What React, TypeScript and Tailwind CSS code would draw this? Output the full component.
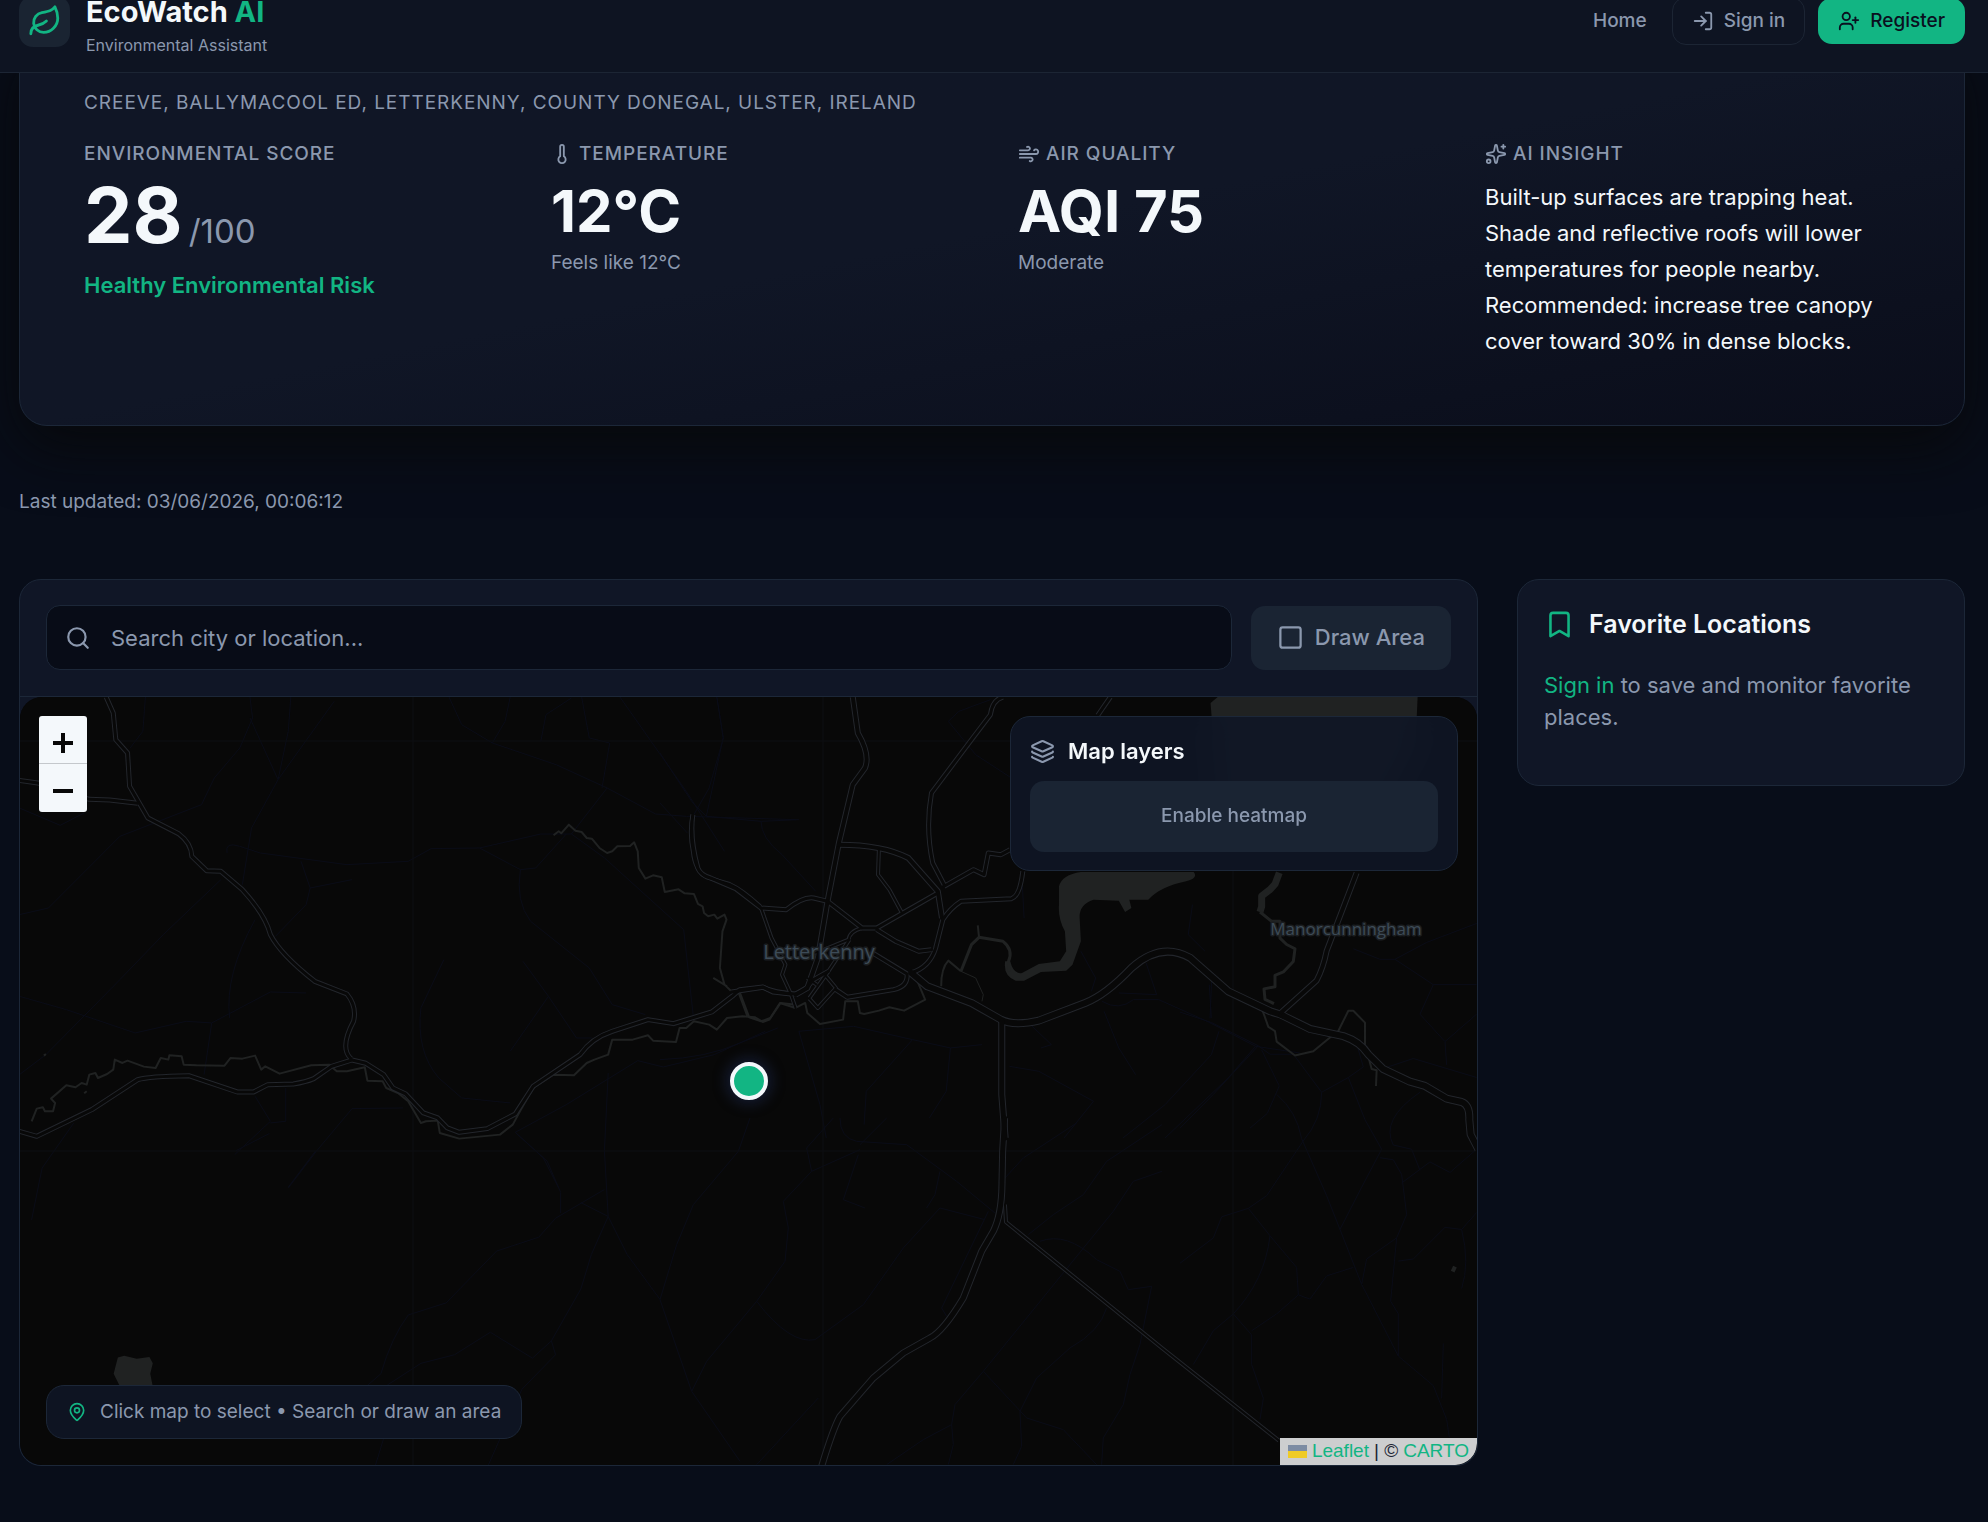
import { Bookmark, Layers, Leaf, LogIn, MapPin, Search, Sparkles, Square, Thermometer, UserPlus, Wind } from "lucide-react";
import type { ReactNode } from "react";

type Tile = {
  transform: string;
  roads: { d: string; width: number }[];
  rivers?: { d: string; width: number }[];
  water?: string[];
  lanes: string;
};

// map geometry, split by tile so every tile keeps its own coordinate space
const TILES: Tile[] = [
  {
    transform: "translate(0 690) scale(.5102 .3333)",
    roads: [
      {
        width: 5,
        d: "M208 27 L222 75 L227 155 L250 195 L254 295 L290 390 L350 437 Q375 465 376 505 L405 548 L433 550 L475 605 Q520 680 530 740 Q550 800 617 880 L680 918 Q700 955 693 1000 Q665 1080 688 1112",
      },
      { width: 5, d: "M38 277 L74 285 L175 334 L215 336 L270 346" },
      {
        width: 5,
        d: "M38 1330 L72 1345 L180 1265 L270 1175 Q290 1165 370 1163 L465 1212 L497 1212 L525 1190 L575 1188 Q600 1182 615 1172 L650 1135 L690 1116 L717 1126 L752 1160 L770 1200 L795 1218 L830 1275 L858 1290 L877 1320 L900 1333 L955 1322 L1010 1278 L1045 1195 L1137 1100 Q1160 1050 1200 1030 L1270 995 L1320 1007 L1395 972 L1435 925 L1450 905 L1495 897 L1515 912 L1550 918",
      },
      { width: 4, d: "M1358 380 Q1350 430 1358 490 Q1362 550 1385 568 L1430 588 Q1455 605 1490 655" },
    ],
    rivers: [
      {
        width: 2,
        d: "M62 1300 L72 1262 L84 1258 L88 1270 L104 1270 L108 1245 L100 1232 L130 1192 L148 1198 L160 1185 L170 1190 L175 1160 L187 1155 L192 1170 L210 1158 L222 1145 L225 1115 L240 1125 L250 1118 L282 1136 L305 1140 L315 1110 L330 1115 L332 1102 L356 1105 L360 1130 L385 1132 L440 1133 L452 1110 L475 1112 L500 1103 L512 1145 L520 1135 L548 1157 L610 1132 L645 1130 L660 1150 L680 1150 L715 1138 L720 1178 L750 1180 L757 1200 L780 1215 L800 1240 L825 1305 L835 1300 L858 1298 L862 1335 L900 1352 L980 1340 L1005 1310 L1020 1268 L1045 1200 L1085 1160 L1125 1162 L1150 1125 L1165 1115 L1192 1100 L1200 1055 L1240 1055 L1270 1042 L1280 1058 L1325 1062 L1332 1020 L1345 1020 L1360 1000 L1390 1010 L1405 1025 L1425 990 L1455 985 L1480 988 L1495 1002 L1508 995 L1530 945 L1560 950",
      },
      {
        width: 2,
        d: "M1085 442 L1095 430 L1100 436 L1115 410 L1128 428 L1140 432 L1150 450 L1160 452 L1175 480 L1190 495 L1200 490 L1210 475 L1235 474 L1243 463 L1250 490 L1252 540 L1265 572 L1280 562 L1297 568 L1303 612 L1330 604 L1342 616 L1360 618 L1368 648 L1377 655 L1380 675 L1388 685 L1400 680 L1406 692 L1420 680 L1424 695 L1416 730 L1411 840 L1420 890 L1437 915 M1398 870 L1425 895 M1448 915 L1465 985",
      },
      { width: 2, d: "M86 1103 L90 1098 M165 1216 L170 1210" },
    ],
    lanes:
      "M38 680 L95 660 L235 445 L395 350 L420 270 L470 180 L495 90 L490 27 M655 40 L545 275 L493 420 L475 590 M490 90 L545 275 M570 27 L565 130 L545 275 M285 27 L280 130 L255 180 M880 27 L905 110 L965 165 L1090 230 L1190 300 L1285 378 L1345 385 L1560 395 M1000 27 L990 100 L965 165 M1060 160 L1070 80 L1120 30 M1140 27 L1155 150 L1195 165 L1180 300 M445 495 Q440 460 470 475 L510 495 L680 530 L800 520 L845 482 L940 480 L1060 438 L1120 438 L1185 510 L1340 725 L1360 1000 M1190 300 L1120 438 M38 925 L130 965 L265 1035 L365 1000 L415 1005 L530 912 L600 915 M433 575 L320 740 L235 875 L90 1100 L38 1160 M940 480 L1020 545 Q1010 640 1040 700 L1155 840 L1200 950 L1265 980 M1020 545 L1050 540 L1110 438 M1025 820 L1075 925 L1000 1090 M1075 925 L1130 1050 L1160 1050 M870 815 L825 960 Q815 1090 860 1170 L905 1230 L1000 1245 M1010 1333 L1110 1250 L1250 1118 L1300 1137 L1400 1100 L1500 1030 M1215 27 L1345 310 L1420 490 M1405 27 L1418 150 L1390 300 L1360 380 M1010 1333 L1065 1410 L1095 1500 M590 520 L608 600 L600 650 L540 745 M608 600 L690 575 M450 990 Q440 860 500 695 M415 1005 L400 1160 M500 1225 L530 1300 L460 1400 M560 1200 L560 1300 L530 1305 M790 1260 L690 1262 L620 1390 L565 1500 M38 360 L118 412 L165 375",
  },
  {
    transform: "translate(660 680) scale(.4209 .3333)",
    roads: [
      { width: 6, d: "M458 57 L470 165 Q500 230 487 270 L458 320 L425 495 L398 670 L375 840 L350 930 L322 950" },
      { width: 6, d: "M425 500 Q530 500 590 540 L660 640 L670 720" },
      { width: 5, d: "M815 57 Q790 65 785 110 L740 185 L645 345 Q630 450 648 555 L675 620" },
      { width: 5, d: "M1070 57 L1040 112" },
      { width: 5, d: "M675 625 L745 575 L770 590 L780 525 L810 530 L832 515" },
      { width: 5, d: "M862 580 Q855 655 835 662 L715 670 Q690 690 672 725 L655 810 Q640 870 595 885" },
      {
        width: 5,
        d: "M78 410 Q70 480 90 570 Q95 590 120 600 L180 632 L240 690 L300 695 Q340 655 365 660 L398 670 L480 750 L515 750 L660 645",
      },
      { width: 4, d: "M520 515 L518 590 L545 635 L575 705" },
      { width: 5, d: "M515 755 L560 790 L615 820 L645 815" },
      { width: 4, d: "M480 750 Q450 760 448 785 L390 815 L355 830 M450 785 L400 880 L355 960" },
      { width: 4, d: "M240 690 L265 780 L298 860 L290 890 L310 945 L322 990" },
      { width: 5, d: "M170 942 L245 928 Q270 945 322 948 Q345 940 365 905 L400 880" },
      { width: 4, d: "M395 895 L418 930 L375 990 L355 962 M350 900 L372 920" },
      { width: 5, d: "M418 935 L445 958 L555 935 Q590 925 587 888 L505 825" },
      {
        width: 8,
        d: "M597 885 L635 925 L740 975 L810 1025 Q840 1045 900 1028 L1010 975 Q1060 950 1120 870 Q1190 790 1260 840 L1350 940 L1450 1000 L1480 1012",
      },
      { width: 7, d: "M812 1030 L812 1250 L820 1380" },
    ],
    rivers: [
      { width: 3, d: "M715 880 L740 800 L758 778 L815 790 Q840 815 828 850 L830 880" },
      { width: 2, d: "M755 742 L758 778 M668 925 Q668 870 685 848 L715 880" },
      { width: 1, d: "M715 880 L750 900 L768 950 L765 970" },
      {
        width: 2,
        d: "M190 945 L212 1018 L240 1030 L262 1020 L285 975 L322 990 L345 975 L350 1005 L380 1038 L435 1025 L440 970 L470 970 L475 1005 L485 1008 L520 998 L545 988 L580 998 L630 965 L610 905",
      },
    ],
    water: [
      "M948 625 Q955 590 1000 582 L1268 582 Q1280 600 1250 610 Q1190 625 1160 665 L1115 665 L1120 690 L1105 702 L1090 668 L1030 665 Q995 680 997 720 L1000 790 L980 860 L965 878 L905 882 L865 908 L845 908 Q815 895 820 850 L832 850 Q840 890 860 885 L900 858 L950 850 L965 820 L962 760 Q945 720 948 680 Z",
      "M1308 75 L1325 57 L1800 57 L1795 200 L1700 420 L1330 420 Z",
    ],
    lanes:
      "M0 225 L75 370 L110 415 L240 430 L330 425 M135 57 L150 180 L110 415 M0 375 L65 465 M240 430 Q240 480 290 530 L370 640 M685 130 L750 230 L835 300 M685 130 L710 100 L785 65 M1000 820 L1035 900 L1025 940 M1265 680 L1255 770 L1295 820 M1155 855 L1180 950 L1090 945 M1185 965 L1300 1030 L1415 1105 L1520 1125 M1050 970 Q1090 1000 1125 965 L1185 965 M0 1145 Q110 1140 190 1095 L280 1050 M330 1060 L460 1045 L600 1085 L690 1110 L765 1100 M600 1085 L490 1240 L485 1340 M690 1110 L680 1240 L640 1320 M880 1040 L930 1100 L905 1110 M1055 1000 L1090 1110 L1130 1190 M1328 1060 L1310 1130 L1200 1280 L1100 1380 M1415 1105 L1350 1200 L1200 1380 M830 1165 L900 1180 L1030 1270 L960 1380 M1305 920 L1310 1020 M330 1060 L380 1280 L395 1380 M860 600 L865 720",
  },
  {
    transform: "translate(1180 860) scale(.3333 .4221)",
    roads: [
      {
        width: 8,
        d: "M305 372 L390 405 L490 422 Q540 435 565 465 L610 500 L690 530 L735 540 L800 570 L845 578 Q870 585 868 620 L872 655 L895 690",
      },
      { width: 6, d: "M305 365 L410 290 Q430 260 440 220 L530 35" },
    ],
    rivers: [
      { width: 7, d: "M298 35 L285 62 L270 75 L245 90 L245 115 L240 128" },
      { width: 3, d: "M240 128 L275 150 L300 150 L300 190 L320 205 L345 215 L340 245 L310 270 L285 278 L285 305 L252 310 L255 335 L282 345" },
      {
        width: 2,
        d: "M248 362 L265 400 L285 410 L290 435 L345 468 L400 458 L450 425 L475 410 L505 362 L520 362 L555 390 L555 445 M565 470 L575 500 L590 503 L588 540",
      },
      { width: 4, d: "M818 980 L825 968" },
    ],
    lanes:
      "M0 365 L95 390 L235 445 L270 465 L345 465 M345 470 L425 555 L505 520 L550 495 L530 440 M235 445 L100 560 L0 640 M245 455 L298 540 L262 605 L210 640 M290 560 Q350 600 365 665 L440 800 L545 1010 L655 1180 L760 1250 L800 1330 L808 1372 M370 670 L260 800 L205 830 L125 850 L100 900 L0 960 M205 830 L270 895 L350 970 L355 1035 L390 1045 L440 990 L520 970 M270 895 Q255 1000 160 1080 L100 1120 L40 1200 M890 155 L740 200 L645 240 L600 240 L520 215 M645 240 L760 300 L890 300 M760 300 L720 370 L795 435 L890 370 M795 435 L800 490 M425 555 Q425 620 370 670 M505 520 L555 620 L605 690 L545 780 L480 880 M650 900 L680 845 L665 750 L640 715 L600 710 M650 900 L632 1050 L655 1080 L655 1180 M605 500 L700 475 L890 520 M720 555 Q600 620 640 680 L695 690 L720 740 M665 770 L750 720 L810 745 L890 690 M545 1010 L560 950 L650 900 M655 955 L700 950 L795 875 L845 880 L890 840 M845 880 Q870 960 845 1020 M160 1080 L215 1130 L215 1200 L250 1280 L240 1330 M215 1120 L290 1080 L355 1035 M790 1150 L785 1280 M95 290 L90 380",
  },
  {
    transform: "translate(640 1120) scale(.3333)",
    roads: [
      {
        width: 7,
        d: "M1094 0 L1088 100 L1086 200 Q1085 290 1060 340 L1025 400 L970 540 Q910 640 870 660 L790 705 L700 780 L600 895 Q580 930 545 1045",
      },
      { width: 4, d: "M1095 260 L1098 312 L1566 690 L1917 968" },
    ],
    lanes:
      "M330 0 L295 100 L160 260 L110 380 L60 545 L110 690 L155 820 L300 1030 M580 0 L500 90 L515 160 M600 0 Q600 60 650 70 L800 80 L950 190 L1065 285 M660 95 L515 160 L430 250 L445 330 L435 430 L350 550 L200 730 L155 820 M655 110 L610 245 L675 270 M350 550 Q450 680 525 665 L670 560 L790 390 L900 270 L1035 305 M1045 280 L905 570 L920 595 M740 0 L660 80 M900 160 L885 230 L860 270 M1310 15 L1150 120 L1095 180 M1566 20 L1400 130 L1330 230 L1240 290 L1165 350 M1566 160 L1480 190 L1420 280 L1030 760 L945 860 L935 920 L850 965 L740 1040 M1030 760 L1160 900 L1270 935 L1370 1040 M1400 570 Q1380 640 1290 690 L1190 780 L1140 880 L1145 985 L1120 1040 M1200 370 Q1280 340 1370 425 L1440 460 L1465 515 L1535 505 L1500 680 L1470 770 L1450 860 L1390 960 L1385 1040 M935 920 L940 980 L925 1040 M535 840 L350 1040",
  },
  {
    transform: "translate(0 980) scale(.4209 .3456)",
    roads: [],
    water: ["M285 1182 L270 1145 L280 1098 L295 1093 L325 1102 L355 1097 L363 1115 L357 1145 L363 1182 Z"],
    lanes:
      "M872 1180 L905 1145 Q930 1040 970 975 L1060 940 L1180 790 L1280 750 L1320 695 L1436 612 M1445 690 L1405 800 L1380 900 L1310 1050 L1265 1100 L1165 1025 L1080 1090 L1000 1115 L920 1178 M1227 450 L1300 530 L1332 620 L1332 680 M1445 275 L1436 500 L1445 690 L1490 800 L1568 930 M750 500 L685 605 M1380 650 L1445 690 M1310 1050 L1320 1090 L1240 1190 L1160 1410 M912 1330 L892 1410 M175 420 L100 550 L75 700 M640 450 L560 500",
  },
];

function MapCanvas() {
  return (
    <svg viewBox="20 699 1457 768" preserveAspectRatio="xMidYMid slice" className="absolute inset-0 size-full" aria-hidden="true">
      <rect x="20" y="699" width="1457" height="768" fill="#080808" />
      <g fill="none" stroke="#0a0c17">
        {TILES.map((tile) => (
          <g key={tile.transform} transform={tile.transform}>
            <path d={tile.lanes} vectorEffect="non-scaling-stroke" />
          </g>
        ))}
      </g>
      <path d="M413 699V1467M823 699V1467M1233 699V1467M20 743H1477M20 1153H1477" stroke="#0d0e12" fill="none" />
      {TILES.map((tile) => (
        <g key={tile.transform} transform={tile.transform} fill="none" stroke="#202222" strokeLinejoin="round">
          {tile.water?.map((d) => <path key={d} d={d} fill="#202222" stroke="none" />)}
          {tile.rivers?.map((r) => <path key={r.d} d={r.d} strokeWidth={r.width} vectorEffect="non-scaling-stroke" />)}
        </g>
      ))}
      {/* casing first, then the road body, so junctions stay open */}
      <g fill="none" stroke="#23262c" strokeLinejoin="round">
        {TILES.map((tile) => (
          <g key={tile.transform} transform={tile.transform}>
            {tile.roads.map((r) => (
              <path key={r.d} d={r.d} strokeWidth={r.width} vectorEffect="non-scaling-stroke" />
            ))}
          </g>
        ))}
      </g>
      <g fill="none" stroke="#080808" strokeLinejoin="round" strokeLinecap="round">
        {TILES.map((tile) => (
          <g key={tile.transform} transform={tile.transform}>
            {tile.roads.map((r) => (
              <path key={r.d} d={r.d} strokeWidth={r.width - 2} vectorEffect="non-scaling-stroke" />
            ))}
          </g>
        ))}
      </g>
      <g
        className="font-['Open_Sans','Noto_Sans',sans-serif] font-medium"
        textAnchor="middle"
        fill="#3d4b57"
        stroke="#1b1e21"
        strokeWidth="3"
        strokeLinejoin="round"
        paintOrder="stroke"
      >
        <text x="819" y="961" fontSize="20">
          Letterkenny
        </text>
        <text x="1346" y="937" fontSize="17">
          Manorcunningham
        </text>
      </g>
    </svg>
  );
}

function MapView() {
  return (
    <div className="relative h-[768px] overflow-hidden rounded-[22px] bg-[#080808]">
      <MapCanvas />

      <div className="absolute top-[19px] left-[19px] flex w-[48px] flex-col overflow-hidden rounded-[3px] bg-[#f4f8fb]">
        <button type="button" aria-label="Zoom in" className="flex h-[48px] items-center justify-center border-b border-[#c4c8cc]">
          <svg viewBox="0 0 20 20" className="mt-[6px] size-[20px]" stroke="#080808" strokeWidth="4">
            <path d="M0 10H20M10 0V20" />
          </svg>
        </button>
        <button type="button" aria-label="Zoom out" className="flex h-[48px] items-center justify-center">
          <svg viewBox="0 0 20 20" className="mt-[6px] size-[20px]" stroke="#080808" strokeWidth="4">
            <path d="M0 10H20" />
          </svg>
        </button>
      </div>

      <div className="absolute top-[19px] right-[19px] w-[448px] rounded-[20px] border border-[#1c2738] bg-[#101626]/90 px-[19px] pt-[17px] pb-[18px] backdrop-blur-md">
        <h3 className="flex items-center gap-[13px] text-[22px] leading-[34px] font-semibold">
          <Layers className="size-[25px] text-[#8b98ae]" />
          Map layers
        </h3>
        <button
          type="button"
          className="mt-[13px] h-[71px] w-full rounded-[14px] bg-[#1a2433] text-[19px] font-medium text-[#8b98ae]"
        >
          Enable heatmap
        </button>
      </div>

      <span className="absolute top-1/2 left-1/2 size-[38px] -translate-1/2 rounded-full border-4 border-[#f4f8fb] bg-[#12b583] shadow-[0_0_14px_4px_rgba(40,60,120,0.35)]" />

      <p className="absolute bottom-[26px] left-[26px] flex h-[54px] items-center gap-[13px] rounded-[18px] border border-[#1c2738] bg-[#0e1422] px-[20px] text-[19px] text-[#8b98ae]">
        <MapPin className="size-[20px] text-[#12b583]" />
        Click map to select • Search or draw an area
      </p>

      <p className="absolute right-0 bottom-0 flex h-[27px] items-center gap-[5px] bg-[#cdcecf] px-[8px] font-['Liberation_Sans',sans-serif] text-[19px] text-[#1c2534]">
        <svg viewBox="0 0 19 13" className="h-[13px] w-[19px]">
          <rect width="19" height="7" fill="#7d8ca3" />
          <rect y="6" width="19" height="7" fill="#efcb26" />
        </svg>
        <a href="#" className="text-[#12b583]">
          Leaflet
        </a>
        <span>| ©</span>
        <a href="#" className="text-[#12b583]">
          CARTO
        </a>
      </p>
    </div>
  );
}

function StatLabel({ icon, children }: { icon?: ReactNode; children: ReactNode }) {
  return (
    <p className="flex items-center gap-[6px] text-[19px] leading-[28px] font-medium tracking-wider text-[#8b98ae] uppercase">
      {icon}
      {children}
    </p>
  );
}

function Header() {
  return (
    <header className="relative z-10 -mt-[30px] flex h-[103px] items-center justify-between border-b border-[#1c2534] bg-[#0e1422] pr-[23px] pl-[19px]">
      <div className="flex items-center gap-[16px]">
        <div className="flex size-[51px] items-center justify-center rounded-[14px] bg-[#1a2432]">
          <Leaf className="size-[34px] text-[#12b583]" />
        </div>
        <div className="pt-[8px]">
          <p className="text-[29px] leading-[34px] font-bold text-[#f4f8fb]">
            EcoWatch <span className="text-[#12b583]">AI</span>
          </p>
          <p className="mt-[5px] text-[16px] leading-[22px] text-[#8b98ae]">Environmental Assistant</p>
        </div>
      </div>
      <nav className="flex items-center gap-[13px] text-[19px] font-medium">
        <a href="#" className="mr-[12px] text-[#8b98ae]">
          Home
        </a>
        <a href="#" className="flex h-[48px] items-center gap-[10px] rounded-[14px] border border-[#1c2534] px-[19px] text-[#8b98ae]">
          <LogIn className="size-[22px]" />
          Sign in
        </a>
        <a href="#" className="flex h-[46px] items-center gap-[10px] rounded-[14px] bg-[#12b583] px-[20px] text-[#0a1020]">
          <UserPlus className="size-[22px]" />
          Register
        </a>
      </nav>
    </header>
  );
}

export default function App() {
  return (
    <div className="flex min-h-screen flex-col bg-[#080d19] font-[Inter,sans-serif] text-[#f4f8fb]">
      <Header />
      <main className="pr-[23px] pb-[48px] pl-[19px]">
        <section className="-mt-[40px] rounded-[28px] border border-[#1c2738] bg-linear-to-br from-[#101626] from-50% to-[#0a0d1a] px-[64px] pt-[55px] pb-[66px] shadow-[0_20px_60px_rgba(8,8,8,0.8)]">
          <p className="text-[19px] leading-[28px] tracking-wider text-[#8b98ae] uppercase">
            Creeve, Ballymacool ED, Letterkenny, County Donegal, Ulster, Ireland
          </p>
          <div className="mt-[23px] grid grid-cols-4 gap-[52px]">
            <div>
              <StatLabel>Environmental Score</StatLabel>
              <p className="mt-[9px] text-[77px] leading-[77px] font-bold">
                28<span className="ml-[6px] text-[33px] leading-none font-normal text-[#8b98ae]">/100</span>
              </p>
              <p className="mt-[16px] text-[22px] leading-[30px] font-semibold text-[#12b583]">Healthy Environmental Risk</p>
            </div>
            <div>
              <StatLabel icon={<Thermometer className="size-[22px]" />}>Temperature</StatLabel>
              <p className="mt-[14px] text-[58px] leading-[58px] font-bold">12°C</p>
              <p className="mt-[9px] text-[19px] leading-[28px] text-[#8b98ae]">Feels like 12°C</p>
            </div>
            <div>
              <StatLabel icon={<Wind className="size-[22px]" />}>Air Quality</StatLabel>
              <p className="mt-[14px] text-[58px] leading-[58px] font-bold">AQI 75</p>
              <p className="mt-[9px] text-[19px] leading-[28px] text-[#8b98ae]">Moderate</p>
            </div>
            <div>
              <StatLabel icon={<Sparkles className="size-[22px]" />}>AI Insight</StatLabel>
              <p className="mt-[11px] text-[22px] leading-[36px]">
                Built-up surfaces are trapping heat. Shade and reflective roofs will lower temperatures for people nearby. Recommended:
                increase tree canopy cover toward 30% in dense blocks.
              </p>
            </div>
          </div>
        </section>

        <p className="mt-[62px] text-[19px] leading-[28px] text-[#8b98ae]">Last updated: 03/06/2026, 00:06:12</p>

        <div className="mt-[63px] grid grid-cols-[1fr_448px] items-start gap-[39px]">
          <section className="overflow-hidden rounded-[22px] border border-[#1c2738] bg-[#101626]">
            <div className="flex items-center gap-[19px] border-b border-[#1c2738] px-[26px] pt-[25px] pb-[26px]">
              <div className="flex h-[65px] flex-1 items-center rounded-[14px] border border-[#1c2738] bg-[#080c17] px-[18px] text-[#8b98ae]">
                <Search className="size-[26px] shrink-0" />
                <input
                  type="text"
                  aria-label="Search city or location"
                  placeholder="Search city or location..."
                  className="h-full w-full pl-[20px] text-[22px] placeholder-[#8b98ae] outline-none"
                />
              </div>
              <button
                type="button"
                className="flex h-[64px] items-center gap-[11px] rounded-[14px] bg-[#1a2433] px-[26px] text-[22px] font-medium text-[#8b98ae]"
              >
                <Square className="size-[27px]" />
                Draw Area
              </button>
            </div>
            <MapView />
          </section>

          <aside className="rounded-[22px] border border-[#1c2738] bg-[#101626] px-[26px] pt-[26px] pb-[52px]">
            <h2 className="flex items-center gap-[14px] text-[25px] leading-[36px] font-semibold">
              <Bookmark className="size-[31px] text-[#12b583]" />
              Favorite Locations
            </h2>
            <p className="mt-[27px] text-[22px] leading-[32px] text-[#8b98ae]">
              <a href="#" className="text-[#12b583]">
                Sign in
              </a>{" "}
              to save and monitor favorite places.
            </p>
          </aside>
        </div>
      </main>
    </div>
  );
}
